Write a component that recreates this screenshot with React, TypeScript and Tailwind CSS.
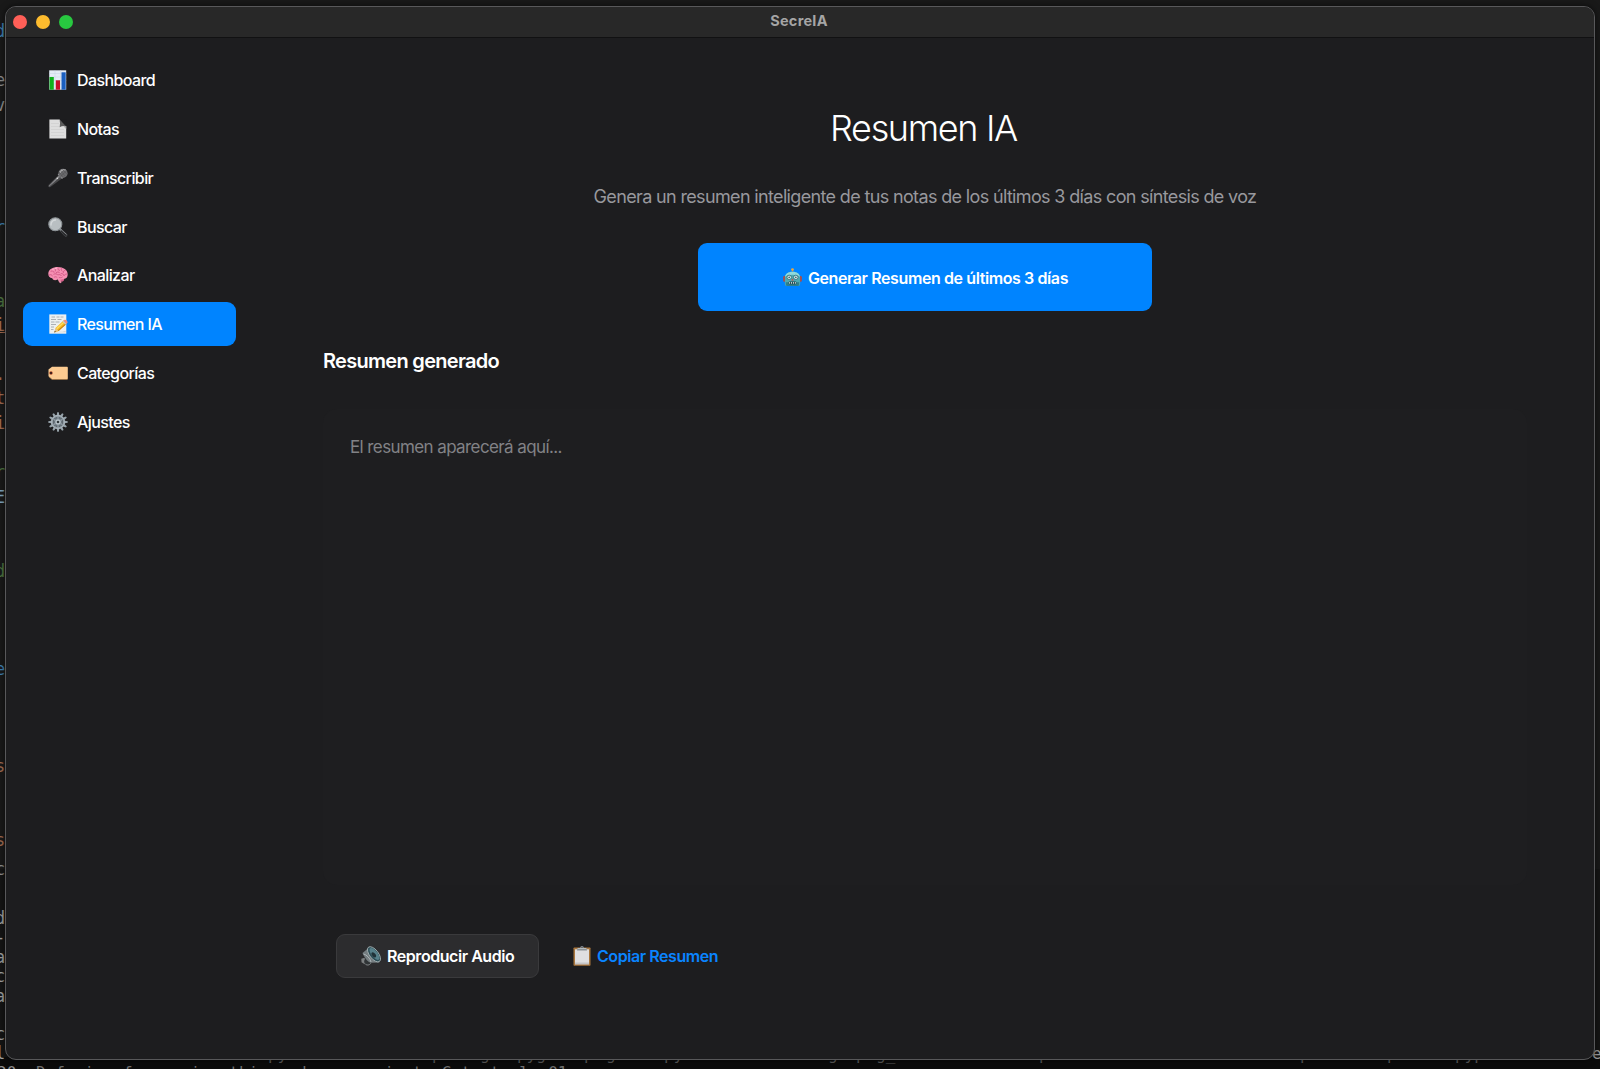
import type { ReactNode } from "react";

function Icon({ children, className = "h-5 w-5" }: { children: ReactNode; className?: string }) {
  return (
    <svg viewBox="0 0 20 20" className={"shrink-0 " + className} aria-hidden="true">
      {children}
    </svg>
  );
}

function ChartIcon() {
  return (
    <Icon>
      <rect x="1.2" y="0.3" width="17" height="19.4" fill="#e3ecf6" />
      <path d="M1.2 3.5h17M1.2 7h17M1.2 10.500h17M1.2 14h17M7 .3v19M12.500 .3v19" stroke="#c6d5e6" strokeWidth=".5" />
      <rect x="1.500" y="7" width="4.300" height="12.700" fill="#0fb11c" />
      <rect x="7.800" y="10.300" width="4.200" height="9.400" fill="#c8102a" />
      <rect x="13.500" y="2.300" width="4.200" height="17.400" fill="#1a5fc0" />
    </Icon>
  );
}

function PageIcon() {
  return (
    <Icon>
      <path d="M1.400.4h10.200l6.600 7v12.200H1.400z" fill="#dedede" />
      <path d="M3 4.500h8M3 7.500h8M3 10.500h13M3 13.500h13M3 16.500h13" stroke="#cfcfcf" strokeWidth=".7" />
      <path d="M11 2l7.200 8.200V7.400l-3.500-3z" fill="#a8a8a8" />
      <path d="M11.600.4l6.600 7c-2-.7-4.600-.4-6.600.9.500-2.600.600-5.500 0-7.900z" fill="#5c5c5c" />
      <path d="M11.600.4h6.600v7z" fill="#1d1d1f" />
    </Icon>
  );
}

function MicIcon() {
  return (
    <Icon>
      <path d="M10.300 7.200l3.300 3.500L2 19.200.3 18.900.5 17z" fill="#48484a" />
      <path d="M10.800 7.700l1.200 1.200L1.200 18.500l-.4-.5z" fill="#8b8b8e" />
      <path d="M9.700 6.600l1.300-1.200 4.500 4.200-1.500 1.500z" fill="#a5a5a8" />
      <circle cx="15" cy="5.300" r="4.600" fill="#6b6b6e" />
      <path d="M11.300 3.700a4.600 4.600 0 0 1 4.600-2.800c1.500.2 2.300.8 2.800 1.500-2.300-.6-4.800.3-6 2.800z" fill="#a8a8aa" />
      <path d="M12.500 2.500l5 6M14.500 1.200l4.300 5M11.200 4.300l4 4.800M18.500 3l-5.500 5M16.500 1.400L11.800 6" stroke="#4b4b4d" strokeWidth=".45" />
      <circle cx="9.300" cy="10.300" r=".8" fill="#e5e5e5" />
    </Icon>
  );
}

function SearchIcon() {
  return (
    <Icon>
      <path d="M12.500 11.500l6.600 6-.3 1.700-1.800.1-6-6.500z" fill="#29292b" stroke="#5f6265" strokeWidth=".5" />
      <path d="M12.800 12.300l5.700 5.200" stroke="#a6abaf" strokeWidth=".7" />
      <path d="M11 11l2.300 2.300" stroke="#82878b" strokeWidth="2" />
      <circle cx="7.300" cy="7.300" r="6.500" fill="#b9bfc2" stroke="#8c9296" strokeWidth="1.100" />
      <path d="M3 8a4.600 4.600 0 0 1 4.500-5" fill="none" stroke="#d5d9db" strokeWidth="1.300" strokeLinecap="round" />
    </Icon>
  );
}

function BrainIcon() {
  return (
    <Icon>
      <path d="M10.500 13.500l5.500-.3c.7 1.700-.5 3.500-3 3.500-1.800 0-2.500-1.500-2.500-3.200z" fill="#d5608a" />
      <path d="M9.800 13.500l2.500.3c.2 1.700.8 2.800 1.300 3.600l-1.500.8c-1.300-1.200-2-2.700-2.300-4.700z" fill="#ec8fac" />
      <path d="M.3 8.500C.5 4.300 4.800 2 9.800 2c5.500 0 9.900 3 9.900 7.300 0 2.800-1.500 4.800-4.200 4.700-2.200 1-4.300 1-6 .4-1.700 1.300-4.500 1.200-5.300-1.100C1.700 13 .1 11.200.3 8.500z" fill="#f58fb2" />
      <path d="M3 6.300c1.300-.8 2.500-.3 3 1M6.300 3.500c1.200.4 1.600 1.500 1 2.600M10 2.800c-.5 1.300.2 2.500 1.600 2.600M13.800 3.300c-1 .8-.8 2 .3 2.700M17 5.500c-1.300.1-2 .9-1.700 2.200M1.200 10c1.500-.8 2.800-.3 3.300 1M5.800 9.200c1.500-.9 3.200-.5 4 .8 1.500-.8 3-.4 3.600.7M8.300 7.500c1.200-.9 2.700-.7 3.400.4M13.300 8.500c1.300 0 2.500.7 2.600 2M18.600 9c-1-.2-1.800.3-2 1.200M6.200 12.200c1-.7 2.200-.6 2.900.3M11.200 12.500c1 .5 2.300.4 3.200-.4" fill="none" stroke="#c94d7d" strokeWidth=".75" strokeLinecap="round" />
      <path d="M4.500 4.700c1.500-1 3-1.500 4.500-1.500" fill="none" stroke="#ffc2d5" strokeWidth=".8" strokeLinecap="round" />
    </Icon>
  );
}

function MemoIcon() {
  return (
    <Icon>
      <rect x="1.300" y=".4" width="17" height="19.300" fill="#edf0f0" />
      <path d="M3.500 3h3.500M8.500 3h3M12.500 3h3M3 5.500h5M9.500 5.500h4M3 8h3.500M7.500 8h4M3 10.500h5M3 13h3M3 15.500h2.500" stroke="#9aa0a4" strokeWidth=".8" />
      <path d="M6 18.300c3-1.200 7 .4 11.700-1.600v1.600z" fill="#c3c7c9" opacity=".7" />
      <path d="M6.300 18.500l1.500-4.800 8-7.400 3 3.300-8.200 7.300z" fill="#f8b91d" />
      <path d="M8.300 14.300l7.600-7 .9.900-7.800 7.200z" fill="#ffde62" />
      <path d="M9.900 16.200l8-7 .7.700-8 7z" fill="#c77f12" />
      <path d="M15.100 7l1.600-1.300c1.500-.4 3.100 1.400 2.800 2.900L18.200 10z" fill="#ee8d83" />
      <path d="M14.500 7.500l.9-.8 3 3.300-.9.800z" fill="#c5cbd0" />
      <path d="M6.300 18.500l1.500-4.500 2.300 2.800z" fill="#e8c48e" />
      <path d="M6.300 18.500l.6-1.800.9 1.100z" fill="#333" />
    </Icon>
  );
}

function TagIcon() {
  return (
    <Icon>
      <path d="M4 3.700h14.800c.6 0 1 .4 1 1v10.500c0 .6-.4 1-1 1H4L.5 13.300V6.600z" fill="#fccb91" />
      <path d="M1 14l3 2.500h15c.4 0 .8-.3.800-.8" fill="none" stroke="#d99d58" strokeWidth=".5" />
      <circle cx="3" cy="10" r="1.700" fill="#a33d22" />
      <circle cx="3" cy="10" r="1" fill="#25191a" />
    </Icon>
  );
}

const TEETH = [0, 30, 60, 90, 120, 150, 180, 210, 240, 270, 300, 330];

function GearIcon() {
  return (
    <Icon>
      {TEETH.map((angle) => (
        <path key={angle} d="M8.700 3.300l.5-3h1.600l.5 3z" fill="#98a4ac" transform={`rotate(${angle} 10 10)`} />
      ))}
      <circle cx="10" cy="10" r="6" fill="none" stroke="#8f9ba3" strokeWidth="2.400" />
      <circle cx="10" cy="10" r="6.500" fill="none" stroke="#b8c2c9" strokeWidth=".7" />
      <circle cx="10" cy="10" r="4.900" fill="#66717a" />
      <path d="M10 5v10M5.700 7.500l8.600 5M5.700 12.500l8.600-5" stroke="#98a4ac" strokeWidth="1.100" />
      <circle cx="10" cy="10" r="3" fill="#bbc6cd" stroke="#7b878f" strokeWidth=".6" />
      <circle cx="10" cy="10" r="1.300" fill="#30373c" />
    </Icon>
  );
}

function RobotIcon() {
  return (
    <Icon className="h-[19px] w-[19px]">
      <path d="M9.500 2h1v3h-1z" fill="#7a7f82" />
      <circle cx="10" cy="1.700" r="1.500" fill="#f0a63a" />
      <rect x=".2" y="8.500" width="3" height="6" rx="1.200" fill="#b04a45" />
      <rect x="16.800" y="8.500" width="3" height="6" rx="1.200" fill="#b04a45" />
      <path d="M2 10c0-3.500 3.200-6 8-6s8 2.500 8 6v6.500c0 1.500-1 2.500-2.500 2.500h-11C3 19 2 18 2 16.500z" fill="#4fa9b0" />
      <path d="M2 9.500C2.300 6.300 5.500 4 10 4s7.700 2.300 8 5.500c-1.500-1.700-4-2.500-8-2.500S3.500 7.800 2 9.500z" fill="#8edade" />
      <path d="M3 15h14v2c0 1.200-.8 2-2 2H5c-1.200 0-2-.8-2-2z" fill="#2f7f8a" />
      <circle cx="6.500" cy="9.800" r="2.300" fill="#d9f7f7" stroke="#27636c" strokeWidth=".8" />
      <circle cx="13.500" cy="9.800" r="2.300" fill="#d9f7f7" stroke="#27636c" strokeWidth=".8" />
      <circle cx="6.500" cy="9.800" r=".9" fill="#4b5a60" />
      <circle cx="13.500" cy="9.800" r=".9" fill="#4b5a60" />
      <path d="M10 11l1.200 2.200H8.800z" fill="#d8433c" />
      <rect x="6" y="14.300" width="8" height="2.700" rx="1" fill="#173f46" />
      <path d="M7 14.700v1.900M9 14.700v1.900M11 14.700v1.900M13 14.700v1.900" stroke="#e5eeee" strokeWidth=".9" />
    </Icon>
  );
}

function SpeakerIcon() {
  return (
    <Icon>
      <path d="M.3 12.800l3-1 2.600 3.900-2.200 2.600L.5 16.200z" fill="#7c7f80" />
      <circle cx="6.700" cy="15.600" r="3.500" fill="#303436" />
      <path d="M4 17.700c1.500 1.900 4.500 1.700 5.800-.4" fill="none" stroke="#888d8f" strokeWidth="1" />
      <path d="M1.500 7L8.300 1.300l10.200 15.200-9.200.2C6.500 15.500 3 11 1.500 7z" fill="#757d80" />
      <path d="M2.500 8c3 .7 6.500 4 7.500 8" fill="none" stroke="#b9c1c4" strokeWidth=".8" />
      <ellipse cx="13" cy="8.300" rx="4.400" ry="9" transform="rotate(-38 13 8.300)" fill="#2d4d56" stroke="#a0adaf" strokeWidth=".9" />
      <ellipse cx="13.500" cy="7.900" rx="3" ry="7.200" transform="rotate(-38 13.500 7.900)" fill="#56808a" />
      <ellipse cx="12.800" cy="8.900" rx="1.700" ry="3" transform="rotate(-38 12.800 8.900)" fill="#203238" />
    </Icon>
  );
}

function ClipboardIcon() {
  return (
    <Icon>
      <rect x="1.500" y="1.500" width="17" height="18.300" rx=".7" fill="#a9763d" />
      <rect x="3" y="3.300" width="14" height="15" fill="#dfdfe1" />
      <path d="M3 16.500h14v1.800H3z" fill="#c4c4c6" />
      <path d="M5.500 2h2.700C8.300.8 9 .1 10 .1s1.700.7 1.800 1.900h2.700l.5 2.500H5z" fill="#8b9296" />
      <path d="M5.700 2.500h8.600" stroke="#c9ced1" strokeWidth=".7" />
      <circle cx="10" cy="1.500" r=".6" fill="#3b3f42" />
    </Icon>
  );
}

const NAV: { label: string; icon: ReactNode; active?: boolean }[] = [
  { label: "Dashboard", icon: <ChartIcon /> },
  { label: "Notas", icon: <PageIcon /> },
  { label: "Transcribir", icon: <MicIcon /> },
  { label: "Buscar", icon: <SearchIcon /> },
  { label: "Analizar", icon: <BrainIcon /> },
  { label: "Resumen IA", icon: <MemoIcon />, active: true },
  { label: "Categorías", icon: <TagIcon /> },
  { label: "Ajustes", icon: <GearIcon /> },
];

// Sliver of the code editor left of the window: [top, character, colour class]
const EDITOR: [number, string, string][] = [
  [31, "d", "text-[#3f7fb0]"],
  [80, "e", "text-[#8c8c8c]"],
  [105, "v", "text-[#8c8c8c]"],
  [227, "r", "text-[#3f7fb0]"],
  [301, "a", "text-[#4d7340]"],
  [325, "i", "text-[#a0694f] underline"],
  [374, ".", "text-[#a0694f]"],
  [398, "t", "text-[#a0694f]"],
  [423, "i", "text-[#a0694f]"],
  [472, "r", "text-[#4d7340]"],
  [497, "E", "text-[#7fa3bd]"],
  [571, "d", "text-[#4d7340]"],
  [669, "e", "text-[#3f7fb0]"],
  [766, "s", "text-[#a0694f]"],
  [840, "s", "text-[#a0694f]"],
  [869, "c", "text-[#8c8c8c]"],
  [918, "d", "text-[#a0a0a0]"],
  [937, "-", "text-[#a0a0a0]"],
  [957, "a", "text-[#a0a0a0]"],
  [976, "c", "text-[#a0a0a0]"],
  [996, "a", "text-[#a0a0a0]"],
  [1034, "c", "text-[#a0a0a0]"],
  [1053, "l", "text-[#a0a0a0]"],
];

// Descenders of the terminal line that show under the window: [left, text]
const TERMINAL: [number, string][] = [
  [268, "py"], [432, "p"], [480, "g"], [517, "pyg"], [584, "p"], [606, "g"], [664, "py"],
  [828, "g"], [856, "p"], [876, "g_"], [1039, "p"], [1300, "p"], [1387, "p"], [1455, "pyp"],
];

function Backdrop() {
  return (
    <div className="absolute inset-0 overflow-hidden bg-[#191919] font-['DejaVu_Sans_Mono',monospace] text-[17px]">
      <div className="absolute inset-x-0 bottom-0 h-[200px] bg-[#141414]" />
      <div className="absolute inset-x-0 bottom-0 h-3 bg-[#0b0b0b]" />
      {EDITOR.map(([top, ch, color]) => (
        <span key={top} className={"absolute -left-[5px] -mt-3 h-6 leading-6 " + color} style={{ top }}>
          {ch}
        </span>
      ))}
      {TERMINAL.map(([left, text]) => (
        <span key={left} className="absolute top-[1042.500px] text-[16px] leading-6 text-[#5c5c5c]" style={{ left }}>
          {text}
        </span>
      ))}
      <span className="absolute top-[1042px] left-[1592px] text-[16px] leading-6 text-[#9a9a9a]">e</span>
      <span className="absolute top-[1061px] left-[-3px] text-[16px] leading-6 whitespace-pre text-[#8c8c8c]">
        20
      </span>
      <span className="absolute top-[1061px] left-[36px] text-[16px] leading-6 tracking-[0.030px] whitespace-pre text-[#707070]">
        Defusing from using this and one project: Catastral: 01
      </span>
    </div>
  );
}

export default function App() {
  return (
    <div className="relative h-[1069px] w-[1600px] overflow-hidden pt-[6px] pl-[5px] font-['Inter',sans-serif] text-white">
      <Backdrop />
      <div className="relative flex h-[1054px] w-[1590px] flex-col overflow-hidden rounded-[11px] border border-[#58585a] bg-[#1d1d1f] shadow-[0_0_6px_rgba(0,0,0,0.6)]">
        <header className="grid h-[31px] shrink-0 grid-cols-3 items-center border-b border-[#111112] bg-[#282828]">
          <div className="flex gap-[8.700px] pl-[7.300px]">
            <span className="h-[14px] w-[14px] rounded-full bg-[#ff5f57]" />
            <span className="h-[14px] w-[14px] rounded-full bg-[#febc2e]" />
            <span className="h-[14px] w-[14px] rounded-full bg-[#28c840]" />
          </div>
          <h1 className="-mt-[2px] pr-[2px] text-center text-[14.500px] leading-5 font-bold tracking-[0.250px] text-[#a5a5a5]">SecreIA</h1>
        </header>

        <div className="flex min-h-0 flex-1">
          <nav className="ml-[17px] flex w-[213px] shrink-0 flex-col gap-[4.850px] pt-5">
            {NAV.map(({ label, icon, active }) => (
              <a
                key={label}
                className={
                  "flex h-11 items-center gap-[9px] rounded-[9px] pl-[25px] text-base font-medium tracking-[-0.600px] " +
                  (active ? "bg-[#0084ff]" : "")
                }
              >
                {icon}
                <span>{label}</span>
              </a>
            ))}
          </nav>

          <main className="ml-[87px] flex w-[1204px] flex-col">
            <h2 className="mt-[68px] pr-[3px] text-center text-[36px] leading-[44px] font-light tracking-[-1.350px]">Resumen IA</h2>
            <p className="mt-[35px] text-center text-lg leading-6 tracking-[-0.650px] text-[#98989d]">
              Genera un resumen inteligente de tus notas de los últimos 3 días con síntesis de voz
            </p>
            <button className="mt-[34px] flex h-[68px] w-[454px] items-center justify-center gap-[6px] self-center rounded-[9px] bg-[#0084ff] pt-px pl-px text-base font-semibold tracking-[-0.400px]">
              <RobotIcon />
              <span>Generar Resumen de últimos 3 días</span>
            </button>
            <h3 className="mt-9 text-xl leading-7 font-semibold tracking-[-0.700px]">Resumen generado</h3>
            <div className="mt-[34px] h-[476px] rounded-[14px] bg-[#1e1e20] px-[27px] pt-[26px]">
              <p className="text-[17px] leading-6 tracking-[-0.600px] text-[#828286]">El resumen aparecerá aquí...</p>
            </div>
            <div className="mt-[49px] flex pl-[13px]">
              <button className="flex h-11 w-[203px] items-center gap-[6px] rounded-[9px] border border-[#3a3a3c] bg-[#2c2c2e] pl-[24px] text-base font-semibold tracking-[-0.450px]">
                <SpeakerIcon />
                <span>Reproducir Audio</span>
              </button>
              <button className="ml-[32.500px] flex h-11 items-center gap-[5.500px] text-base font-semibold tracking-[-0.430px] text-[#0a84ff]">
                <ClipboardIcon />
                <span>Copiar Resumen</span>
              </button>
            </div>
          </main>
        </div>
      </div>
    </div>
  );
}
